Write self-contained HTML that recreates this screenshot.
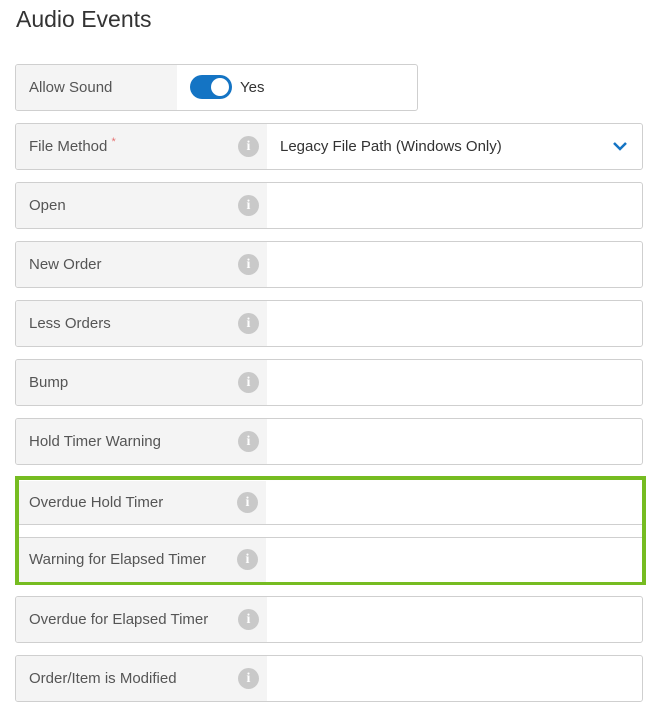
<!DOCTYPE html><html><head><style>
body{margin:0;width:658px;height:715px;background:#fff;font-family:"Liberation Sans",sans-serif;position:relative;overflow:hidden}
h1{position:absolute;left:16px;top:6px;margin:0;font-size:23px;font-weight:normal;color:#333}
.r{position:absolute;left:15px;width:626px;height:45px;border:1px solid #cfcfcf;border-radius:3px;background:#fff;overflow:hidden}
.l{position:absolute;left:0;top:0;bottom:0;width:251px;background:#f4f4f4;color:#555;font-size:15px;line-height:46px;padding-left:13px;box-sizing:border-box}
.i{position:absolute;left:222px;top:12px;width:21px;height:21px;border-radius:50%;background:#c9c9c9;color:#fff;font:bold 14px/21px "Liberation Serif",serif;text-align:center}
.g{position:absolute;left:15px;top:476px;width:623px;height:101px;border:4px solid #76bc21}
.g .r{left:0;width:623px;border:none;border-radius:0}
</style></head><body>
<h1>Audio Events</h1>
<div class="r" style="top:64px;width:401px"><div class="l" style="width:161px">Allow Sound</div>
<div style="position:absolute;left:174px;top:10px;width:42px;height:24px;border-radius:12px;background:#1474c4"><div style="position:absolute;right:3px;top:3px;width:18px;height:18px;border-radius:50%;background:#fff"></div></div>
<div style="position:absolute;left:224px;top:0;line-height:46px;font-size:15px;color:#333">Yes</div></div>
<div class="r" style="top:123px"><div class="l">File Method <span style="color:#e57373;font-size:11px;vertical-align:top;line-height:36px">*</span><div class="i">i</div></div>
<div style="position:absolute;left:264px;line-height:46px;font-size:15px;color:#333">Legacy File Path (Windows Only)</div>
<svg style="position:absolute;left:596px;top:16px" width="16" height="12"><path d="M2 3l6 6 6-6" stroke="#1474c4" stroke-width="2.5" fill="none"/></svg></div>
<div class="r" style="top:182px"><div class="l">Open<div class="i">i</div></div></div>
<div class="r" style="top:241px"><div class="l">New Order<div class="i">i</div></div></div>
<div class="r" style="top:300px"><div class="l">Less Orders<div class="i">i</div></div></div>
<div class="r" style="top:359px"><div class="l">Bump<div class="i">i</div></div></div>
<div class="r" style="top:418px"><div class="l">Hold Timer Warning<div class="i">i</div></div></div>
<div class="g">
<div class="r" style="top:1px;height:43px;border-bottom:1px solid #cfcfcf"><div class="l" style="width:247px;line-height:43px;padding-left:10px">Overdue Hold Timer<div class="i" style="left:218px;top:11px">i</div></div></div>
<div class="r" style="top:57px;height:44px;border-top:1px solid #cfcfcf"><div class="l" style="width:247px;line-height:44px;padding-left:10px">Warning for Elapsed Timer<div class="i" style="left:218px;top:11px">i</div></div></div>
</div>
<div class="r" style="top:596px"><div class="l">Overdue for Elapsed Timer<div class="i">i</div></div></div>
<div class="r" style="top:655px"><div class="l">Order/Item is Modified<div class="i">i</div></div></div>
</body></html>
